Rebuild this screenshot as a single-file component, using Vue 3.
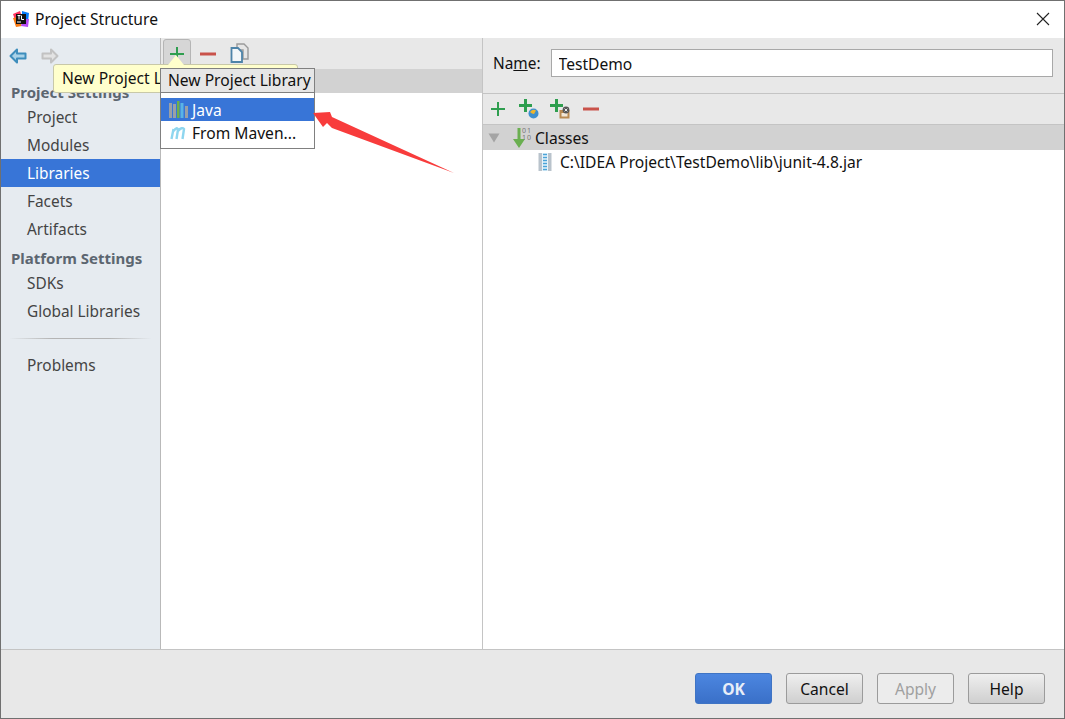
<template>
  <div class="dialog">
    <header class="title-bar">
      <svg class="app-icon" width="16" height="16" viewBox="0 0 16 16">
        <path d="M0 3 L7 0 L9 6 L2 9Z" fill="#fe315d" />
        <path d="M0 7 L3 16 L9 15 L5 6Z" fill="#f97a12" />
        <path d="M9 0 L16 2 L15 11 L9 8Z" fill="#087cfa" />
        <path d="M8 15 L15 16 L16 8 L10 8Z" fill="#b74af7" />
        <rect x="3" y="3" width="10" height="10" fill="#111" />
        <rect x="4" y="10.5" width="4" height="1" fill="#fff" />
        <path d="M4.5 4.5h3M6 4.5v4M8.5 4.5v4h2.5" stroke="#fff" stroke-width="1" fill="none" />
      </svg>
      <span class="title-text">Project Structure</span>
      <svg class="close-icon" width="14" height="14" viewBox="0 0 14 14">
        <path d="M1 1 L13 13 M13 1 L1 13" stroke="#222" stroke-width="1.1" />
      </svg>
    </header>

    <div class="body">
      <aside class="sidebar">
        <div class="nav-arrows">
          <svg width="18" height="16" viewBox="0 0 18 16">
            <path d="M8 1.5 L1.5 8 L8 14.5 V10.5 H16.5 V5.5 H8Z" fill="#a9d2e8" stroke="#3d8dbc" stroke-width="2" stroke-linejoin="round" />
          </svg>
          <svg width="18" height="16" viewBox="0 0 18 16">
            <path d="M10 1.5 L16.5 8 L10 14.5 V10.5 H1.5 V5.5 H10Z" fill="#e3e3e3" stroke="#c2c2c2" stroke-width="2" stroke-linejoin="round" />
          </svg>
        </div>
        <div class="group-title first">Project Settings</div>
        <div
          v-for="item in projectItems"
          :key="item"
          class="nav-item"
          :class="{ selected: item === 'Libraries' }"
        >{{ item }}</div>
        <div class="group-title second">Platform Settings</div>
        <div v-for="item in platformItems" :key="item" class="nav-item">{{ item }}</div>
        <div class="nav-separator"></div>
        <div class="nav-item">Problems</div>
      </aside>

      <section class="middle">
        <div class="middle-toolbar">
          <button class="tool-btn pressed">
            <svg width="16" height="16" viewBox="0 0 16 16">
              <path d="M8 1 V15 M1 8 H15" stroke="#2f9e4f" stroke-width="2" />
            </svg>
          </button>
          <svg class="remove-icon" width="16" height="4" viewBox="0 0 16 4">
            <rect width="16" height="3" y="0.5" fill="#c9524a" />
          </svg>
          <svg class="copy-icon" width="19" height="20" viewBox="0 0 19 20">
            <path d="M7 1 H14 L18 5 V16 H13 V7 H7Z" fill="#e6e6e6" stroke="#9a9a9a" stroke-width="1.4" />
            <path d="M1.5 5 H8 L12 9 V19 H1.5Z" fill="#f3f6f8" stroke="#4d83a8" stroke-width="1.8" />
          </svg>
        </div>
        <div class="middle-band"></div>
      </section>

      <section class="detail">
        <div class="name-row">
          <label class="name-label">Na<u>m</u>e:</label>
          <input class="name-input" type="text" value="TestDemo" />
        </div>
        <div class="detail-toolbar">
          <svg width="16" height="16" viewBox="0 0 16 16">
            <path d="M8 1 V15 M1 8 H15" stroke="#2f9e4f" stroke-width="2" />
          </svg>
          <svg class="globe-add" width="20" height="20" viewBox="0 0 20 20">
            <path d="M6.5 0 V13 M0 6.5 H13" stroke="#2f9e4f" stroke-width="3" />
            <circle cx="14.5" cy="14.5" r="5" fill="#3d8fcf" />
            <path d="M11 13 Q14 9.5 17 11.5 L15 15 L13 14.5Z" fill="#f0b52b" />
          </svg>
          <svg width="20" height="20" viewBox="0 0 20 20">
            <path d="M6.5 0 V13 M0 6.5 H13" stroke="#2f9e4f" stroke-width="3" />
            <rect x="9.5" y="11" width="10" height="8.5" fill="#b98a52" />
            <rect x="11.5" y="14" width="6" height="3.5" fill="#f1e6d6" />
            <circle cx="16" cy="11" r="3.4" fill="#555" />
            <path d="M14.6 9.6 L17.4 12.4 M17.4 9.6 L14.6 12.4" stroke="#fff" stroke-width="0.9" />
          </svg>
          <svg width="16" height="4" viewBox="0 0 16 4">
            <rect width="16" height="3" y="0.5" fill="#c9524a" />
          </svg>
        </div>
        <div class="classes-band">
          <svg class="tree-arrow" width="12" height="10" viewBox="0 0 12 10">
            <path d="M0.5 0.5 H11.5 L6 9.5Z" fill="#a4a4a4" />
          </svg>
          <svg class="classes-icon" width="12" height="20" viewBox="0 0 12 20">
            <path d="M4.5 0 H7.5 V11 H12 L6 20 L0 11 H4.5Z" fill="#6aaf50" />
          </svg>
          <span class="bits">01<br />10</span>
          <span class="classes-text">Classes</span>
        </div>
        <div class="tree-row">
          <svg width="14" height="18" viewBox="0 0 14 18">
            <rect x="0.5" y="0" width="13" height="18" fill="#b9c3cc" />
            <rect x="4" y="0" width="6" height="18" fill="#e9f4fb" />
            <path d="M5 1.5h4M5 4.5h4M5 7.5h4M5 10.5h4M5 13.5h4M5 16.5h4" stroke="#4aa3d8" stroke-width="1.3" />
          </svg>
          <span>C:\IDEA Project\TestDemo\lib\junit-4.8.jar</span>
        </div>
      </section>

      <!-- tooltip + popup sit above the panels -->
      <div class="tooltip">New Project Library</div>
      <div class="popup">
        <div class="popup-title">New Project Library</div>
        <div class="popup-list">
          <div class="popup-item active">
            <svg width="19" height="17" viewBox="0 0 19 17">
              <rect x="0" y="2" width="3" height="15" fill="#9aa0a6" />
              <rect x="4" y="3" width="3" height="14" fill="#9aa0a6" />
              <rect x="8" y="0" width="2.5" height="17" fill="#6fb04a" />
              <rect x="11.5" y="2" width="3" height="15" fill="#5ab4e6" />
              <rect x="16" y="5" width="3" height="12" fill="#9aa0a6" />
            </svg>
            <span>Java</span>
          </div>
          <div class="popup-item">
            <svg width="19" height="14" viewBox="0 0 19 14">
              <path d="M2.5 13 L4.5 3 M4.5 5 Q8 0.5 9 3.5 L7.5 13 M9 5 Q13 0.5 15 3 L13.5 13" stroke="#8ed6ef" stroke-width="2.4" fill="none" />
            </svg>
            <span>From Maven...</span>
          </div>
        </div>
      </div>
      <svg class="red-arrow" width="142" height="63" viewBox="0 0 142 63">
        <path d="M0 1 L17 0 L19 5 L141 61 L19 16 L14 11 L10 15Z" fill="#f83c3c" />
      </svg>
    </div>

    <footer class="footer">
      <button class="btn primary">OK</button>
      <button class="btn">Cancel</button>
      <button class="btn disabled">Apply</button>
      <button class="btn">Help</button>
    </footer>
  </div>
</template>

<script setup>
const projectItems = ['Project', 'Modules', 'Libraries', 'Facets', 'Artifacts']
const platformItems = ['SDKs', 'Global Libraries']
</script>

<style>
html, body {
  margin: 0;
  background: #fff;
}
</style>

<style scoped>
.dialog {
  width: 1065px;
  height: 719px;
  box-sizing: border-box;
  border: 1px solid #707070;
  display: flex;
  flex-direction: column;
  font-family: "Noto Sans", "Noto Sans CJK SC", sans-serif;
  font-size: 15.6px;
  color: #111;
  background: #fff;
  overflow: hidden;
}

.title-bar {
  height: 37px;
  flex: none;
  display: flex;
  align-items: center;
  padding: 0 0 2px 12px;
  box-sizing: border-box;
  background: #fff;
}

.app-icon {
  margin-right: 6px;
}

.close-icon {
  margin-left: auto;
  margin-right: 14px;
}

.body {
  flex: 1;
  display: flex;
  position: relative;
  min-height: 0;
}

.sidebar {
  width: 159px;
  flex: none;
  background: #e6ebf0;
  border-right: 1px solid #b9b9b9;
  color: #444;
  font-size: 15.4px;
}

.nav-arrows {
  height: 33px;
  display: flex;
  align-items: center;
  gap: 14px;
  padding: 2px 0 0 8px;
  box-sizing: border-box;
}

.group-title {
  font-weight: 700;
  font-size: 15px;
  color: #5c6670;
  padding-left: 10px;
  height: 25px;
  line-height: 28px;
}

.group-title.first {
  margin-top: 7px;
}

.group-title.second {
  height: 26px;
  line-height: 30px;
}

.nav-item {
  height: 28px;
  line-height: 30px;
  padding-left: 26px;
}

.nav-item.selected {
  background: #3875d7;
  color: #fff;
}

.nav-separator {
  height: 1px;
  margin: 13px 8px 12px;
  background: linear-gradient(90deg, #e6ebf0, #b4b4b4 30%, #b4b4b4 70%, #e6ebf0);
}

.middle {
  width: 321px;
  flex: none;
  border-right: 1px solid #c4c4c4;
  display: flex;
  flex-direction: column;
}

.middle-toolbar {
  height: 31px;
  flex: none;
  background: #e8e8e8;
  display: flex;
  align-items: center;
  padding-left: 2px;
}

.tool-btn {
  width: 28px;
  height: 30px;
  padding: 0;
  display: flex;
  align-items: center;
  justify-content: center;
  background: #d6d6d6;
  border: 1px solid #b5b5b5;
  border-radius: 3px;
  margin-top: 1px;
}

.remove-icon {
  margin-left: 9px;
}

.copy-icon {
  margin-left: 14px;
  margin-top: -2px;
}

.middle-band {
  height: 24px;
  flex: none;
  background: #d2d2d2;
}

.detail {
  flex: 1;
  min-width: 0;
  display: flex;
  flex-direction: column;
}

.name-row {
  height: 56px;
  flex: none;
  box-sizing: border-box;
  display: flex;
  align-items: center;
  gap: 10px;
  padding: 0 11px 6px 10px;
  background: #e8e8e8;
  border-bottom: 1px solid #c4c4c4;
}

.name-label {
  font-size: 15.4px;
  padding-top: 1px;
}

.name-input {
  flex: 1;
  height: 28px;
  box-sizing: border-box;
  border: 1px solid #a8a8a8;
  padding: 2px 7px 0;
  font: inherit;
  color: #111;
  background: #fff;
  outline: none;
}

.detail-toolbar {
  height: 31px;
  flex: none;
  background: #e8e8e8;
  display: flex;
  align-items: center;
  gap: 13px;
  padding-left: 7px;
  box-sizing: border-box;
  border-bottom: 1px solid #c4c4c4;
}

.globe-add {
  margin-right: -2px;
}

.classes-band {
  height: 25px;
  flex: none;
  background: #d2d2d2;
  display: flex;
  align-items: center;
  padding-left: 5px;
}

.tree-arrow {
  margin-right: 13px;
}

.bits {
  font-size: 7px;
  line-height: 7px;
  color: #777;
  width: 9px;
  margin: -7px 0 0 -3px;
  letter-spacing: 1px;
}

.classes-text {
  margin-left: 4px;
}

.tree-row {
  height: 24px;
  display: flex;
  align-items: center;
  gap: 8px;
  padding-left: 55px;
}

.tooltip {
  position: absolute;
  left: 52px;
  top: 26px;
  width: 245px;
  height: 29px;
  box-sizing: border-box;
  padding-left: 8px;
  line-height: 27px;
  background: #ffffcc;
  border: 1px solid #c8c8a8;
  border-radius: 3px;
}

.tooltip::before {
  content: "";
  position: absolute;
  left: 114px;
  top: -10px;
  border-left: 8px solid transparent;
  border-right: 8px solid transparent;
  border-bottom: 10px solid #ffffcc;
}

.popup {
  position: absolute;
  left: 159px;
  top: 30px;
  width: 155px;
  box-sizing: border-box;
  border: 1px solid #808080;
  background: #fff;
}

.popup-title {
  height: 23px;
  line-height: 23px;
  padding-left: 7px;
  white-space: nowrap;
  background: #e6e6e6;
  border-bottom: 1px solid #808080;
}

.popup-list {
  padding: 5px 0 4px;
}

.popup-item {
  height: 23px;
  display: flex;
  align-items: center;
  gap: 4px;
  padding-left: 8px;
  white-space: nowrap;
}

.popup-item.active {
  background: #3875d7;
  color: #fff;
}

.red-arrow {
  position: absolute;
  left: 312px;
  top: 74px;
}

.footer {
  height: 69px;
  flex: none;
  box-sizing: border-box;
  background: #e8e8e8;
  border-top: 1px solid #c4c4c4;
  display: flex;
  align-items: flex-start;
  justify-content: flex-end;
  gap: 14px;
  padding: 23px 19px 0 0;
}

.btn {
  width: 77px;
  height: 31px;
  padding: 0;
  font: inherit;
  color: #111;
  border: 1px solid #9b9b9b;
  border-radius: 3px;
  background: linear-gradient(#efefef, #cfcfcf);
}

.btn.primary {
  background: linear-gradient(#4c86e0, #3a70c8);
  border-color: #3f74c4;
  color: #e8eef8;
  font-weight: 700;
}

.btn.disabled {
  background: #ececec;
  color: #a0a0a0;
}
</style>
